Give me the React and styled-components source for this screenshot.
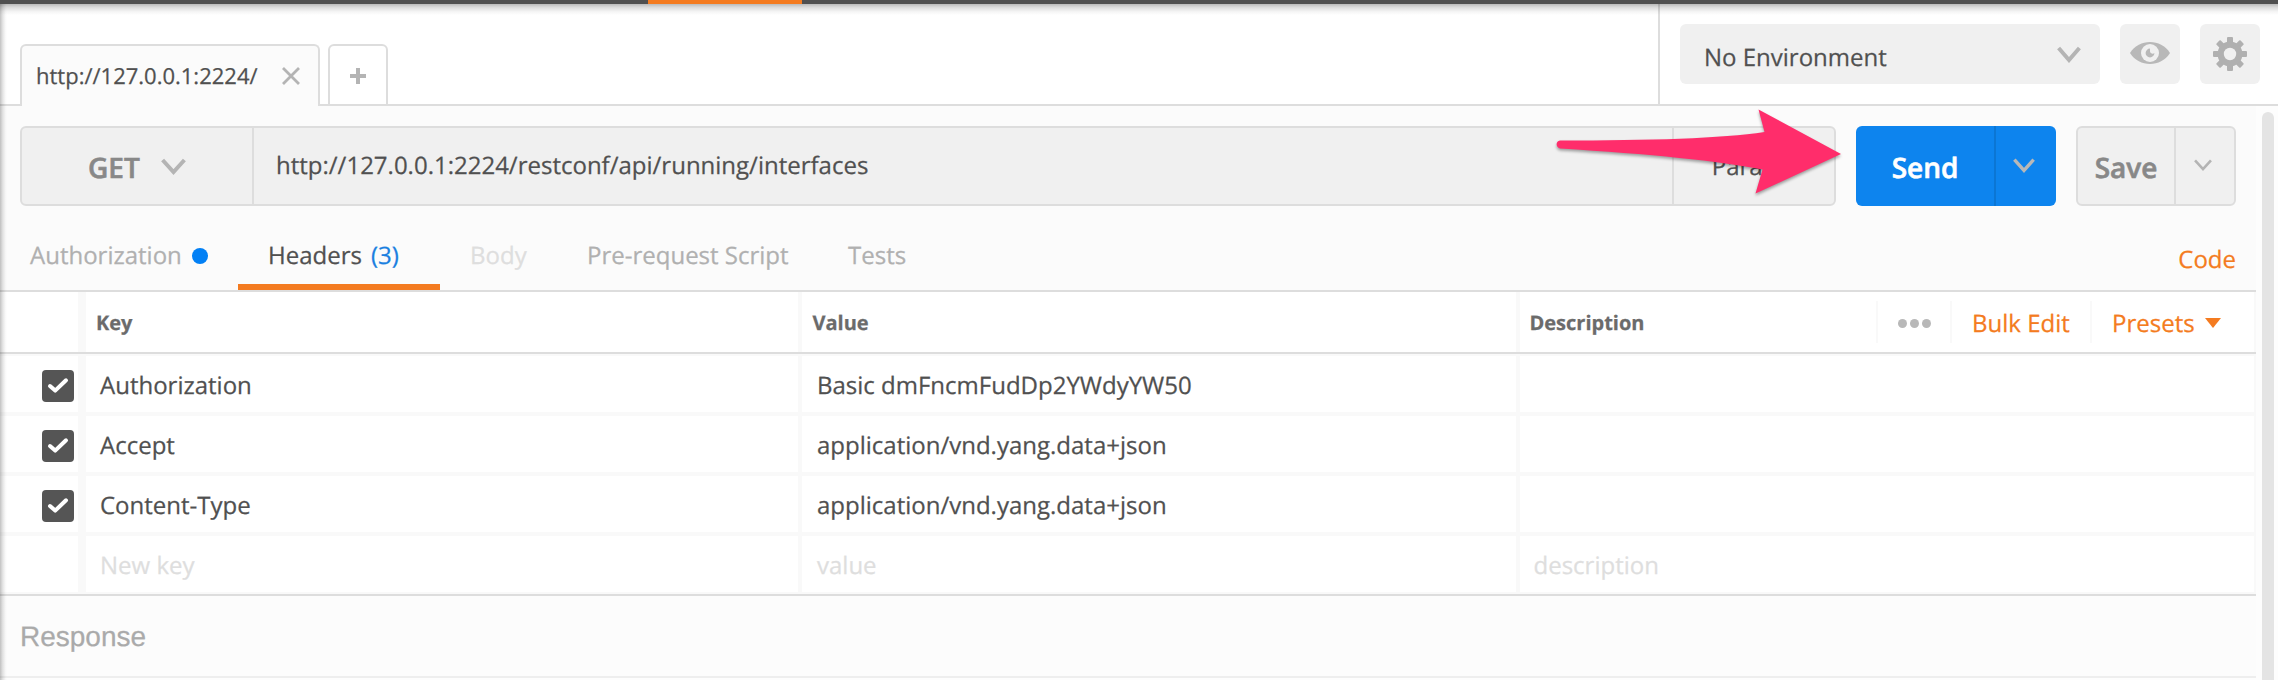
import React from "react";
import styled, { createGlobalStyle, css } from "styled-components";

const Global = createGlobalStyle`
  html, body { margin: 0; padding: 0; background: #fff; }
  *, *::before, *::after { box-sizing: border-box; }
  body { overflow: hidden; font-family: "Open Sans", "Noto Sans", sans-serif; font-size: 24px; color: #505050; text-rendering: geometricPrecision; -webkit-text-stroke: 0.25px currentColor; }
`;

const LINE = "#dddddd";
const SOFT = "#f9f9f9";
const ORANGE = "#f47b20";
const BLUE = "#0d84ee";

const Window = styled.div`
  position: relative;
  display: flex;
  flex-direction: column;
  width: 2278px;
  height: 680px;
  overflow: hidden;
  background: #fff;
`;
const NavStrip = styled.div`
  flex: none;
  height: 4px;
  padding-left: 648px;
  background: #505050;
`;
const NavActive = styled.div`
  width: 154px;
  height: 4px;
  background: ${ORANGE};
`;
const TopShade = styled.div`
  position: absolute;
  left: 0;
  right: 0;
  top: 4px;
  height: 11px;
  background: linear-gradient(to bottom, rgba(0,0,0,.27), rgba(0,0,0,.14) 30%, rgba(0,0,0,.04) 70%, transparent);
`;
const SideShade = styled.div`
  position: absolute;
  left: 0;
  top: 4px;
  bottom: 0;
  width: 7px;
  background: linear-gradient(to right, rgba(0,0,0,.24), rgba(0,0,0,.1) 40%, rgba(0,0,0,.02) 80%, transparent);
`;

const Header = styled.header`
  flex: none;
  display: flex;
  height: 102px;
  box-shadow: inset 0 -2px 0 ${LINE};
`;
const TabStrip = styled.div`
  flex: 1;
  display: flex;
  align-items: flex-end;
  gap: 8px;
  padding-left: 20px;
`;
const Tab = styled.div`
  display: flex;
  align-items: center;
  justify-content: space-between;
  width: 300px;
  height: 62px;
  padding: 0 18px 1px 14px;
  border: 2px solid ${LINE};
  border-bottom: 0;
  border-radius: 6px 6px 0 0;
  background: #fbfbfb;
  font-size: 22px;
`;
const AddTab = styled.div`
  display: flex;
  align-items: center;
  justify-content: center;
  width: 60px;
  height: 62px;
  padding-top: 1px;
  border: 2px solid ${LINE};
  border-radius: 6px 6px 0 0;
`;
const EnvBar = styled.div`
  display: flex;
  width: 620px;
  height: 100px;
  padding: 20px 18px 20px 20px;
  gap: 20px;
  border-left: 2px solid ${LINE};
`;
const EnvSelect = styled.div`
  display: flex;
  align-items: center;
  justify-content: space-between;
  width: 420px;
  height: 60px;
  padding: 6px 19px 0 24px;
  border-radius: 6px;
  background: #f0f0f0;

  svg { margin-bottom: 5px; }
`;
const IconButton = styled.div`
  display: flex;
  align-items: center;
  justify-content: center;
  width: 60px;
  height: 60px;
  padding-bottom: ${(p) => p.$lift || 0}px;
  border-radius: 6px;
  background: #f0f0f0;
`;

const Content = styled.div`
  flex: 1;
  display: flex;
  min-height: 0;
  background: #fdfdfd;
`;
const Main = styled.main`
  display: flex;
  flex-direction: column;
  width: 2256px;
`;
const ScrollTrack = styled.div`
  width: 22px;
  padding: 6px 4px 0 6px;
`;
const ScrollThumb = styled.div`
  width: 12px;
  height: 600px;
  border-radius: 6px;
  background: #e4e4e4;
`;

const RequestBar = styled.div`
  display: flex;
  flex: none;
  gap: 20px;
  height: 100px;
  padding: 20px 20px 0;
  background: #fbfbfb;
`;
const frame = css`
  display: flex;
  height: 80px;
  border: 2px solid ${LINE};
  border-radius: 6px;
  background: #f0f0f0;
`;
const UrlBox = styled.div`
  ${frame}
  width: 1816px;
`;
const Method = styled.div`
  display: flex;
  align-items: center;
  justify-content: space-between;
  width: 232px;
  padding: 3px 66px 0 66px;
  border-right: 2px solid ${LINE};
  font-size: 28px;
  font-weight: 600;
  color: #888;
  -webkit-text-stroke-width: 0.6px;

  svg { margin-bottom: 3px; }
`;
const Url = styled.div`
  flex: 1;
  display: flex;
  align-items: center;
  padding: 0 0 2px 22px;
`;
const Params = styled.div`
  display: flex;
  align-items: center;
  justify-content: center;
  width: 162px;
  padding-top: 1px;
  border-left: 2px solid ${LINE};
`;
const SendButton = styled.div`
  display: flex;
  width: 200px;
  height: 80px;
  border-radius: 6px;
  background: ${BLUE};
  color: #fff;
`;
const SaveButton = styled.div`
  ${frame}
  width: 160px;
  color: #888;
`;
const ButtonLabel = styled.div`
  display: flex;
  align-items: center;
  justify-content: center;
  flex: 1;
  padding-top: 4px;
  font-size: 28px;
  font-weight: 600;
  -webkit-text-stroke-width: 0.6px;
`;
const ButtonMenu = styled.div`
  display: flex;
  align-items: center;
  justify-content: center;
  width: ${(p) => p.$w}px;
  padding-bottom: 2px;
  padding-right: ${(p) => p.$shift || 0}px;
  border-left: 2px solid ${(p) => p.$line};
`;

const SubTabs = styled.div`
  display: flex;
  flex: none;
  height: 86px;
  padding-right: 20px;
  border-bottom: 2px solid ${LINE};
  background: #fbfbfb;
`;
const SubTab = styled.div`
  display: flex;
  align-items: center;
  gap: 9px;
  width: ${(p) => p.$w}px;
  padding: 21px 0 ${(p) => (p.$active ? 0 : 6)}px ${(p) => p.$pad}px;
  border-bottom: ${(p) => (p.$active ? `6px solid ${ORANGE}` : "0")};
  color: ${(p) => (p.$active ? "#505050" : p.$disabled ? "#dedede" : "#b0b0b0")};
`;
const Count = styled.span`
  color: #1a7fe0;
`;
const Dot = styled.span`
  width: 16px;
  height: 16px;
  margin: 0 0 0 1px;
  border-radius: 50%;
  background: #0280f5;
`;
const CodeLink = styled.div`
  display: flex;
  align-items: center;
  margin-left: auto;
  padding-top: 23px;
  color: ${ORANGE};
`;

const Table = styled.div`
  flex: none;
  background: #fff;
  border-bottom: 2px solid ${LINE};
`;
const Row = styled.div`
  display: flex;
  height: 60px;
`;
const HeadRow = styled(Row)`
  height: 62px;
  border-bottom: 2px solid ${LINE};
`;
const Cell = styled.div`
  display: flex;
  align-items: center;
  width: ${(p) => p.$w}px;
  padding-left: ${(p) => p.$pad || 0}px;
  border: 0 solid ${SOFT};
  border-right-width: ${(p) => p.$edge}px;
`;
const HeadCell = styled(Cell)`
  font-size: 20px;
  font-weight: 700;
  color: #6b6b6b;
`;
const BodyCell = styled(Cell)`
  padding-top: 2px;
  border-top-width: 2px;
  border-bottom-width: 2px;
  color: ${(p) => (p.$empty ? "#dedede" : "#505050")};
`;
const Checkbox = styled.div`
  display: flex;
  align-items: center;
  justify-content: center;
  width: 32px;
  height: 32px;
  margin: 2px 0 0 42px;
  border-radius: 4px;
  background: #555;
`;
const Actions = styled.div`
  display: flex;
  align-items: center;
  margin-left: auto;
  font-size: 24px;
  font-weight: 400;
  color: ${ORANGE};
`;
const Action = styled.div`
  display: flex;
  align-items: center;
  gap: ${(p) => p.$gap || 0}px;
  width: ${(p) => p.$w}px;
  height: 42px;
  padding: 2px 0 0 ${(p) => p.$pad}px;
  border-left: 2px solid ${SOFT};
`;
const More = styled.i`
  width: 9px;
  height: 9px;
  border-radius: 50%;
  background: #b8b8b8;
`;
const Response = styled.div`
  flex: none;
  display: flex;
  align-items: center;
  height: 82px;
  padding: 2px 0 0 20px;
  border-bottom: 2px solid #eee;
  background: #fcfcfc;
  font-family: "Liberation Sans", Arial, sans-serif;
  font-size: 28px;
  color: #aaa;
`;
const Pointer = styled.svg`
  position: absolute;
  left: 1545px;
  top: 100px;
`;
const PointerShape = styled.path`
  fill: #ff2d6b;
  filter: drop-shadow(0 2px 1.5px rgba(0, 0, 0, 0.35));
`;

const Chevron = ({ w, h, s, color = "#b4b4b4" }) => (
  <svg width={w} height={h} viewBox={`0 0 ${w} ${h}`} fill="none">
    <path d={`M${s * 0.4} ${s * 0.5}L${w / 2} ${h - s * 0.75}L${w - s * 0.4} ${s * 0.5}`} stroke={color} strokeWidth={s} />
  </svg>
);
const Cross = () => (
  <svg width="18" height="18" viewBox="0 0 18 18" stroke="#b4b4b4" strokeWidth="2.8">
    <path d="M1 1L17 17M17 1L1 17" />
  </svg>
);
const Plus = () => (
  <svg width="16" height="16" viewBox="0 0 16 16" stroke="#b4b4b4" strokeWidth="4">
    <path d="M8 0V16M0 8H16" />
  </svg>
);
const Eye = () => (
  <svg width="40" height="24" viewBox="0 0 40 24">
    <path d="M0 12C5 4.500 12 1 20 1S35 4.500 40 12C35 19.500 28 23 20 23S5 19.500 0 12Z" fill="#b8b8b8" />
    <circle cx="20" cy="12" r="9" fill="#f0f0f0" />
    <path d="M20 7.600A4.400 4.400 0 1 0 24.400 12A2.600 2.600 0 0 1 20 10.500Z" fill="#b8b8b8" />
  </svg>
);
const Gear = () => (
  <svg width="34" height="34" viewBox="-17 -17 34 34">
    {[0, 45, 90, 135].map((a) => (
      <rect key={a} x="-3" y="-17" width="6" height="34" rx="1" fill="#b0b0b0" transform={`rotate(${a})`} />
    ))}
    <circle r="12.500" fill="#b0b0b0" />
    <circle r="6.200" fill="#f0f0f0" />
  </svg>
);
const Check = () => (
  <svg width="22" height="18" viewBox="0 0 22 18" fill="none">
    <path d="M3 9L8.200 13.600L19 3.300" stroke="#fff" strokeWidth="4" strokeLinecap="round" strokeLinejoin="round" />
  </svg>
);

const headers = [
  ["Authorization", "Basic dmFncmFudDp2YWdyYW50"],
  ["Accept", "application/vnd.yang.data+json"],
  ["Content-Type", "application/vnd.yang.data+json"],
];

const TableRow = ({ name, value, description, empty }) => (
  <Row>
    <BodyCell $w={86} $edge={8}>{!empty && <Checkbox><Check /></Checkbox>}</BodyCell>
    <BodyCell $w={716} $edge={4} $pad={14} $empty={empty}>{name}</BodyCell>
    <BodyCell $w={718} $edge={4} $pad={15} $empty={empty}>{value}</BodyCell>
    <BodyCell $w={736} $edge={2} $pad={13.5} $empty={empty}>{description}</BodyCell>
  </Row>
);

export default function App() {
  return (
    <Window>
      <Global />
      <NavStrip><NavActive /></NavStrip>
      <Header>
        <TabStrip>
          <Tab>http://127.0.0.1:2224/<Cross /></Tab>
          <AddTab><Plus /></AddTab>
        </TabStrip>
        <EnvBar>
          <EnvSelect>No Environment<Chevron w={24} h={17} s={4} /></EnvSelect>
          <IconButton $lift={2}><Eye /></IconButton>
          <IconButton><Gear /></IconButton>
        </EnvBar>
      </Header>
      <Content>
        <Main>
          <RequestBar>
            <UrlBox>
              <Method>GET<Chevron w={25} h={17} s={4} /></Method>
              <Url>http://127.0.0.1:2224/restconf/api/running/interfaces</Url>
              <Params>Params</Params>
            </UrlBox>
            <SendButton>
              <ButtonLabel>Send</ButtonLabel>
              <ButtonMenu $w={62} $shift={5} $line="#0b76d4"><Chevron w={22} h={15} s={3.4} color="#b8b8b8" /></ButtonMenu>
            </SendButton>
            <SaveButton>
              <ButtonLabel>Save</ButtonLabel>
              <ButtonMenu $w={60} $shift={4} $line={LINE}><Chevron w={18} h={12} s={2.6} /></ButtonMenu>
            </SaveButton>
          </RequestBar>
          <SubTabs>
            <SubTab $w={238} $pad={30}>Authorization<Dot /></SubTab>
            <SubTab $w={202} $pad={30} $active>Headers <Count>(3)</Count></SubTab>
            <SubTab $w={117} $pad={30} $disabled>Body</SubTab>
            <SubTab $w={260} $pad={30}>Pre-request Script</SubTab>
            <SubTab $w={120} $pad={31}>Tests</SubTab>
            <CodeLink>Code</CodeLink>
          </SubTabs>
          <Table>
            <HeadRow>
              <HeadCell $w={86} $edge={8} />
              <HeadCell $w={716} $edge={4} $pad={10}>Key</HeadCell>
              <HeadCell $w={718} $edge={4} $pad={10.5}>Value</HeadCell>
              <HeadCell $w={736} $edge={2} $pad={9.5}>
                Description
                <Actions>
                  <Action $w={74} $pad={20} $gap={3}><More /><More /><More /></Action>
                  <Action $w={140} $pad={20}>Bulk Edit</Action>
                  <Action $w={164} $pad={20} $gap={10}>
                    Presets
                    <svg width="16" height="10" viewBox="0 0 16 10"><path d="M0 0H16L8 10Z" fill={ORANGE} /></svg>
                  </Action>
                </Actions>
              </HeadCell>
            </HeadRow>
            {headers.map(([name, value]) => <TableRow key={name} name={name} value={value} />)}
            <TableRow name="New key" value="value" description="description" empty />
          </Table>
          <Response>Response</Response>
        </Main>
        <ScrollTrack><ScrollThumb /></ScrollTrack>
      </Content>
      <TopShade />
      <SideShade />
      <Pointer width="310" height="105" viewBox="1545 100 310 105">
        <PointerShape d="M1560 140.500C1650 140.500 1722 138.500 1764.500 132L1758.500 109.500L1841 154L1755.500 193.500L1762.500 169.500C1720 161 1650 154 1560 148.500C1555.500 147.500 1555.500 141 1560 140.500Z" />
      </Pointer>
    </Window>
  );
}
